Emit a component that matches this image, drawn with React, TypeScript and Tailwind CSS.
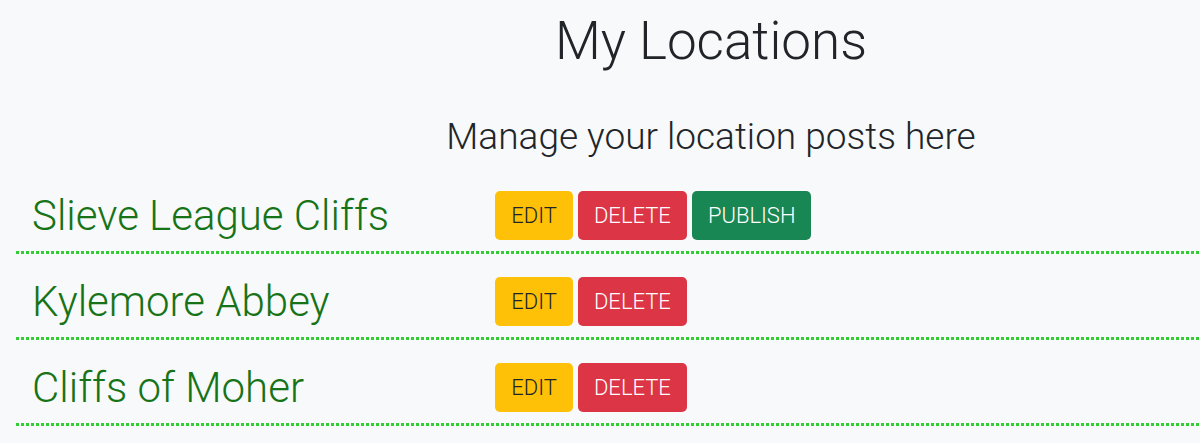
import React from "react";

const rows = [
  { name: "Slieve League Cliffs", publish: true },
  { name: "Kylemore Abbey", publish: false },
  { name: "Cliffs of Moher", publish: false },
];

export default function App() {
  return (
    <div
      className="w-[1200px] h-[443px] overflow-hidden bg-[#f8f9fa]"
      style={{ fontFamily: "Roboto, 'Liberation Sans', sans-serif" }}
    >
      <div className="ml-4 w-[1390px] font-light">
        <h1 className="pt-[10px] text-center text-[53px] leading-[1.2] text-[#212529] font-light">
          My Locations
        </h1>
        <p className="mt-[41px] text-center text-[37px] leading-[1.2] text-[#212529]">
          Manage your location posts here
        </p>
        <div className="mt-[9px]">
          {rows.map((r) => (
            <div key={r.name}>
              <div className="grid grid-cols-3 pt-[23px] pb-[11px]">
                <div className="px-4 text-[42px] leading-[1.2] h-[49px] text-[#177317] whitespace-nowrap">
                  {r.name}
                </div>
                <div className="col-span-2 px-4 flex gap-[5px]">
                  <button className="h-[49px] px-[16px] rounded-[5px] bg-[#ffc107] text-[#212529] text-[22px] font-light uppercase">
                    Edit
                  </button>
                  <button className="h-[49px] px-[16px] rounded-[5px] bg-[#dc3545] text-white text-[22px] font-light uppercase">
                    Delete
                  </button>
                  {r.publish && (
                    <button className="h-[49px] px-[16px] rounded-[5px] bg-[#198754] text-white text-[22px] font-light uppercase">
                      Publish
                    </button>
                  )}
                </div>
              </div>
              <div className="h-[3px] bg-[repeating-linear-gradient(90deg,#32cd32_0px,#32cd32_3px,transparent_3px,transparent_5px)]" />
            </div>
          ))}
        </div>
      </div>
    </div>
  );
}
